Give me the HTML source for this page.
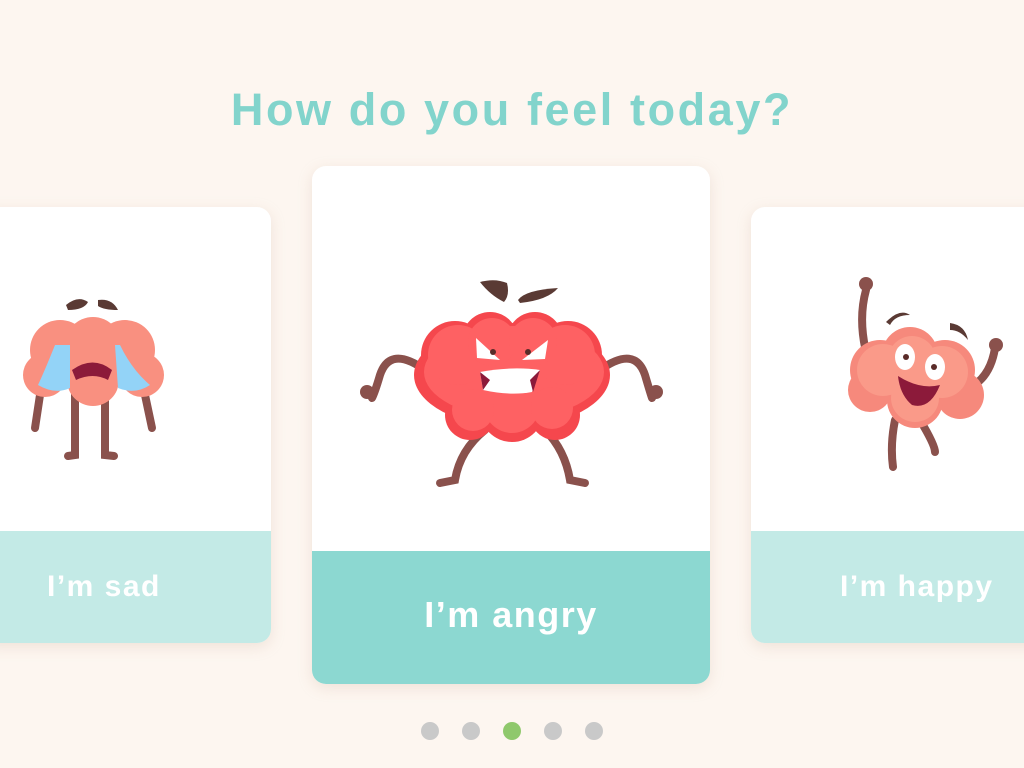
<!DOCTYPE html>
<html><head><meta charset="utf-8"><style>
html,body{margin:0;padding:0}
body{width:1024px;height:768px;background:#fdf6f0;position:relative;overflow:hidden;font-family:"Liberation Sans",sans-serif}
h1{position:absolute;top:84px;left:0;width:1024px;text-align:center;margin:0;font-size:45px;font-weight:bold;color:#82d4cc;letter-spacing:2.6px}
.card{position:absolute;background:#fff;border-radius:14px;overflow:hidden;box-shadow:0 4px 14px rgba(200,170,150,.25)}
.foot{position:absolute;left:0;right:0;bottom:0;color:#fff;font-weight:bold;display:flex;align-items:center;justify-content:center;letter-spacing:1.5px}
.dot{position:absolute;top:722px;width:18px;height:18px;border-radius:50%;background:#c9c9c9}
svg{position:absolute;left:0;top:0}
</style></head><body>
<h1>How do you feel today?</h1>
<div class="card" style="left:-20px;top:207px;width:291px;height:436px"><div class="foot" style="height:112px;background:#c3eae6;font-size:30px;justify-content:flex-start"><span style="margin-left:67px">I’m sad</span></div></div>
<div class="card" style="left:751px;top:207px;width:300px;height:436px"><div class="foot" style="height:112px;background:#c3eae6;font-size:30px;justify-content:flex-start"><span style="margin-left:89px">I’m happy</span></div></div>
<div class="card" style="left:312px;top:166px;width:398px;height:518px"><div class="foot" style="height:133px;background:#8cd8d1;font-size:36px;padding-bottom:6px;box-sizing:border-box">I’m angry</div></div>
<div class="dot" style="left:421px"></div><div class="dot" style="left:462px"></div><div class="dot" style="left:503px;background:#8fc86c"></div><div class="dot" style="left:544px"></div><div class="dot" style="left:585px"></div>
<svg width="1024" height="768" viewBox="0 0 1024 768">
<g stroke="#8a514c" stroke-width="8" fill="none" stroke-linecap="round">
<path d="M425 370 Q390 345 380 375 Q375 392 372 398"/>
<path d="M600 370 Q635 345 645 375 Q650 392 652 398"/>
<path d="M485 430 Q460 450 455 480 L440 483"/>
<path d="M545 430 Q565 450 570 480 L585 483"/>
<path d="M75 390 L75 455 L68 456"/><path d="M105 390 L105 455 L114 456"/>
<path d="M40 395 L35 428"/><path d="M145 395 L152 428"/>
<path d="M875 380 Q855 330 866 290"/>
<path d="M965 390 Q990 380 995 348"/>
<path d="M895 420 Q890 445 893 467"/><path d="M920 420 Q935 445 935 452"/>
</g>
<g fill="#8a514c"><circle cx="367" cy="392" r="7"/><circle cx="656" cy="392" r="7"/><circle cx="866" cy="284" r="7"/><circle cx="996" cy="345" r="7"/></g>
<g fill="#f5474d"><ellipse cx="512" cy="375" rx="98" ry="52"/><circle cx="455" cy="355" r="34"/><circle cx="568" cy="355" r="34"/><circle cx="490" cy="340" r="28"/><circle cx="535" cy="340" r="28"/><circle cx="512" cy="410" r="32"/><circle cx="470" cy="415" r="25"/><circle cx="555" cy="415" r="25"/></g>
<g fill="#fe6163"><ellipse cx="514" cy="372" rx="90" ry="46"/><circle cx="458" cy="355" r="30"/><circle cx="565" cy="355" r="30"/><circle cx="492" cy="342" r="24"/><circle cx="533" cy="342" r="24"/><circle cx="512" cy="405" r="28"/><circle cx="473" cy="410" r="21"/><circle cx="552" cy="408" r="21"/></g>
<path d="M476 338 L500 360 L477 358 Z" fill="#fff"/><path d="M548 340 L522 360 L545 359 Z" fill="#fff"/>
<circle cx="493" cy="352" r="3" fill="#5a2b28"/><circle cx="528" cy="352" r="3" fill="#5a2b28"/>
<path d="M480 372 Q512 366 540 370 L532 392 Q510 396 483 390 Z" fill="#fff"/>
<path d="M480 372 L490 380 L483 390 Z" fill="#8c1a3a"/><path d="M540 370 L530 380 L533 392 Z" fill="#8c1a3a"/>
<path d="M480 282 Q495 278 507 283 Q510 295 504 302 Q490 295 480 282Z" fill="#5a3a34"/><path d="M518 300 Q525 290 558 288 Q548 300 520 303Z" fill="#5a3a34"/>
<g fill="#f99080"><circle cx="60" cy="350" r="30"/><circle cx="125" cy="350" r="30"/><circle cx="93" cy="345" r="28"/><circle cx="45" cy="375" r="22"/><circle cx="142" cy="375" r="22"/><circle cx="93" cy="380" r="26"/></g>
<path d="M55 345 Q45 370 38 385 Q55 395 70 388 L70 345Z" fill="#93d3f7"/><path d="M120 345 Q132 370 150 385 Q135 395 118 388 L115 345Z" fill="#93d3f7"/>
<path d="M72 370 Q93 355 112 370 L108 380 Q93 372 76 380Z" fill="#8c1a3a"/>
<path d="M66 305 Q78 295 88 302 Q84 310 68 310Z" fill="#5a3a34"/><path d="M98 300 Q112 298 118 310 Q104 310 98 306Z" fill="#5a3a34"/>
<g fill="#f6897c"><circle cx="880" cy="370" r="30"/><circle cx="945" cy="370" r="30"/><circle cx="910" cy="355" r="28"/><circle cx="870" cy="390" r="22"/><circle cx="960" cy="395" r="24"/><circle cx="915" cy="400" r="28"/></g>
<g fill="#fa9a89"><circle cx="883" cy="370" r="26"/><circle cx="942" cy="372" r="26"/><circle cx="912" cy="360" r="24"/><circle cx="915" cy="398" r="24"/></g>
<ellipse cx="905" cy="357" rx="10" ry="13" fill="#fff"/><ellipse cx="935" cy="367" rx="10" ry="13" fill="#fff"/>
<circle cx="906" cy="357" r="3" fill="#5a2b28"/><circle cx="934" cy="367" r="3" fill="#5a2b28"/>
<path d="M898 376 Q920 390 940 385 Q930 410 912 405 Q900 395 898 376Z" fill="#8c1a3a"/>
<path d="M886 322 Q900 308 910 315 Q895 315 890 325Z" fill="#5a3a34"/><path d="M950 323 Q965 325 968 340 Q960 330 950 330Z" fill="#5a3a34"/>
</svg>
</body></html>
